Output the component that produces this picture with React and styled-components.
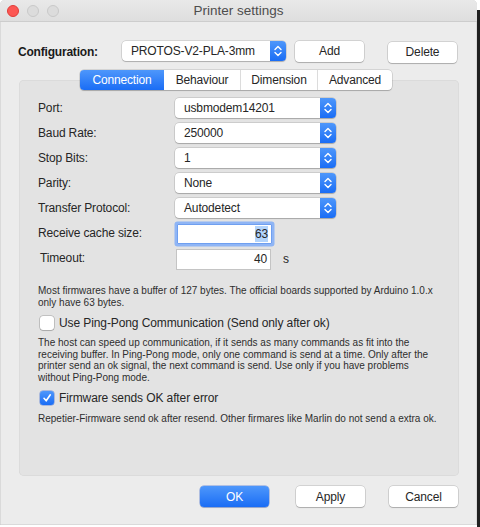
import React from "react";
import styled, { createGlobalStyle, css } from "styled-components";

const GlobalStyle = createGlobalStyle`
  html, body { margin: 0; padding: 0; background: #ffffff; }
  body { font-family: "Liberation Sans", Arial, sans-serif; color: #262626; }
  * { box-sizing: border-box; }
`;

const Page = styled.div`
  position: relative;
  width: 480px;
  height: 527px;
  overflow: hidden;
  &::after {
    content: "";
    position: absolute;
    right: 0;
    top: 10px;
    bottom: 0;
    width: 3px;
    background: #202020;
  }
`;

const Window = styled.div`
  width: 477px;
  height: 525px;
  background: #ececec;
  border-radius: 5px 5px 0 0;
  display: flex;
  flex-direction: column;
  overflow: hidden;
  box-shadow: inset 0 0 0 0.5px #c8c8c8;
`;

const TitleBar = styled.div`
  height: 22px;
  flex: none;
  display: flex;
  align-items: center;
  position: relative;
  background: linear-gradient(#e9e9e9, #dedede);
  border-bottom: 1px solid #cdcdcd;
  padding-left: 7px;
`;

const Lights = styled.div`
  display: flex;
  gap: 8px;
`;

const Light = styled.span`
  width: 12px;
  height: 12px;
  border-radius: 50%;
  background: ${(p) => (p.$red ? "#fc5753" : "#dcdcdc")};
  border: 0.5px solid ${(p) => (p.$red ? "#df3d39" : "#c8c8c8")};
`;

const Title = styled.div`
  position: absolute;
  left: 0;
  right: 0;
  text-align: center;
  font-size: 13.5px;
  color: #4d4d4d;
  pointer-events: none;
`;

const Body = styled.div`
  flex: 1;
  display: flex;
  flex-direction: column;
  padding: 18px 18px 0 19px;
`;

const ConfigRow = styled.div`
  display: flex;
  align-items: center;
  height: 22px;
`;

const BoldLabel = styled.div`
  width: 104px;
  font-size: 12px;
  letter-spacing: -0.2px;
  font-weight: bold;
  color: #1a1a1a;
  margin-left: -1px;
  padding-top: 2px;
`;

const textStyle = css`
  font-size: 12px;
  letter-spacing: -0.15px;
  color: #262626;
`;

const Button = styled.button`
  height: 21px;
  width: 69px;
  border-radius: 4px;
  font-family: "Liberation Sans", Arial, sans-serif;
  ${textStyle}
  display: flex;
  align-items: center;
  justify-content: center;
  border: none;
  padding: 0;
  background: ${(p) => (p.$primary ? "linear-gradient(#4e97fb, #1a6df5)" : "#ffffff")};
  color: ${(p) => (p.$primary ? "#ffffff" : "#262626")};
  box-shadow: ${(p) =>
    p.$primary
      ? "0 0 0 0.5px rgba(0,60,200,0.5), 0 1px 1px rgba(0,0,0,0.15)"
      : "0 0 0 0.5px rgba(0,0,0,0.22), 0 1px 1px rgba(0,0,0,0.18)"};
  margin-left: ${(p) => p.$ml || 0}px;
  margin-top: ${(p) => p.$mt || 0}px;
`;

const Popup = styled.div`
  width: ${(p) => p.$w}px;
  height: 20px;
  background: #ffffff;
  border-radius: 4px;
  box-shadow: 0 0 0 0.5px rgba(0,0,0,0.2), 0 1px 1px rgba(0,0,0,0.18);
  display: flex;
  align-items: center;
  ${textStyle}
  overflow: hidden;
`;

const PopupText = styled.span`
  flex: 1;
  padding-left: 9px;
`;

const Stepper = styled.span`
  width: 16px;
  height: 100%;
  background: linear-gradient(#4e97fb, #1a6df5);
  display: flex;
  align-items: center;
  justify-content: center;
`;

const Chevrons = () => (
  <svg width="10" height="14" viewBox="0 0 10 14">
    <path d="M2 5.5 L5 2.5 L8 5.5" fill="none" stroke="#fff" strokeWidth="1.4" strokeLinecap="round" strokeLinejoin="round" />
    <path d="M2 8.5 L5 11.5 L8 8.5" fill="none" stroke="#fff" strokeWidth="1.4" strokeLinecap="round" strokeLinejoin="round" />
  </svg>
);

const Select = ({ value, w }) => (
  <Popup $w={w}>
    <PopupText>{value}</PopupText>
    <Stepper>
      <Chevrons />
    </Stepper>
  </Popup>
);

const TabsWrap = styled.div`
  display: flex;
  justify-content: center;
  margin-top: 8px;
  padding-right: 6px;
  position: relative;
  z-index: 1;
`;

const Tabs = styled.div`
  display: flex;
  height: 20px;
  background: #ffffff;
  border-radius: 4px;
  box-shadow: 0 0 0 0.5px rgba(0,0,0,0.2), 0 1px 1px rgba(0,0,0,0.18);
  overflow: hidden;
`;

const Tab = styled.div`
  width: ${(p) => p.$w}px;
  display: flex;
  align-items: center;
  justify-content: center;
  ${textStyle}
  color: ${(p) => (p.$active ? "#ffffff" : "#262626")};
  background: ${(p) => (p.$active ? "linear-gradient(#4e97fb, #1a6df5)" : "transparent")};
  border-left: ${(p) => (p.$first || p.$afterActive ? "none" : "1px solid #dcdcdc")};
`;

const Group = styled.div`
  margin-top: -10px;
  height: 396px;
  width: 440px;
  background: #e3e3e3;
  border-radius: 5px;
  box-shadow: inset 0 0 0 0.5px #d4d4d4;
  padding: 18px 19px 0 19px;
  display: flex;
  flex-direction: column;
`;

const Form = styled.div`
  display: grid;
  grid-template-columns: 137px 1fr;
  row-gap: 5px;
  align-items: center;
`;

const Label = styled.div`
  ${textStyle}
  padding-left: ${(p) => (p.$indent ? 2 : 0)}px;
`;

const FieldRow = styled.div`
  display: flex;
  align-items: center;
  gap: 12px;
  height: 20px;
`;

const TextField = styled.div`
  width: ${(p) => p.$w}px;
  height: ${(p) => (p.$focus ? 20 : 21)}px;
  background: #ffffff;
  border: 1px solid ${(p) => (p.$focus ? "#6f9ff0" : "#c4c4c4")};
  box-shadow: ${(p) => (p.$focus ? "0 0 0 2.5px #8fb5f5" : "none")};
  border-radius: ${(p) => (p.$focus ? 1 : 0)}px;
  display: flex;
  align-items: center;
  justify-content: flex-end;
  padding-right: 3px;
  ${textStyle}
  margin-left: ${(p) => (p.$focus ? 2 : 1)}px;
  margin-top: ${(p) => (p.$focus ? 1 : 2)}px;
`;

const Selected = styled.span`
  background: #b3d4fc;
  padding: 1px 0;
`;

const Unit = styled.span`
  ${textStyle}
  margin-top: 2px;
`;

const Note = styled.p`
  margin: ${(p) => p.$mt}px 0 0 0;
  font-size: 10px;
  line-height: 11.5px;
  color: #2e2e2e;
  width: 400px;
`;

const CheckRow = styled.label`
  display: flex;
  align-items: center;
  gap: 5px;
  margin: ${(p) => p.$mt}px 0 0 2px;
  font-size: 12px;
  letter-spacing: -0.1px;
  color: #262626;
  height: 16px;
`;

const Box = styled.span`
  width: 14px;
  height: 14px;
  border-radius: 3px;
  display: flex;
  align-items: center;
  justify-content: center;
  background: ${(p) => (p.$checked ? "linear-gradient(#4e97fb, #1a6df5)" : "#ffffff")};
  box-shadow: ${(p) =>
    p.$checked
      ? "0 0 0 0.5px rgba(0,60,200,0.5)"
      : "0 0 0 0.5px rgba(0,0,0,0.3), 0 1px 1px rgba(0,0,0,0.12)"};
`;

const Check = () => (
  <svg width="10" height="10" viewBox="0 0 10 10">
    <path d="M2 5.3 L4.2 7.8 L8.3 1.8" fill="none" stroke="#fff" strokeWidth="1.6" strokeLinecap="round" strokeLinejoin="round" />
  </svg>
);

const Footer = styled.div`
  display: flex;
  justify-content: flex-end;
  margin-top: 10px;
  padding-right: 1px;
`;

export default function App() {
  const rows = [
    ["Port:", "usbmodem14201"],
    ["Baud Rate:", "250000"],
    ["Stop Bits:", "1"],
    ["Parity:", "None"],
    ["Transfer Protocol:", "Autodetect"],
  ];
  return (
    <Page>
      <GlobalStyle />
      <Window>
        <TitleBar>
          <Lights>
            <Light $red />
            <Light />
            <Light />
          </Lights>
          <Title>Printer settings</Title>
        </TitleBar>
        <Body>
          <ConfigRow>
            <BoldLabel>Configuration:</BoldLabel>
            <Select value="PROTOS-V2-PLA-3mm" w={164} />
            <Button $ml={9}>Add</Button>
            <Button $ml={24} $mt={2}>Delete</Button>
          </ConfigRow>
          <TabsWrap>
            <Tabs>
              <Tab $w={84} $active $first>Connection</Tab>
              <Tab $w={76} $afterActive>Behaviour</Tab>
              <Tab $w={77}>Dimension</Tab>
              <Tab $w={75}>Advanced</Tab>
            </Tabs>
          </TabsWrap>
          <Group>
            <Form>
              {rows.map(([l, v]) => (
                <React.Fragment key={l}>
                  <Label>{l}</Label>
                  <Select value={v} w={161} />
                </React.Fragment>
              ))}
              <Label>Receive cache size:</Label>
              <FieldRow>
                <TextField $w={95} $focus>
                  <Selected>63</Selected>
                </TextField>
              </FieldRow>
              <Label $indent>Timeout:</Label>
              <FieldRow>
                <TextField $w={95}>40</TextField>
                <Unit>s</Unit>
              </FieldRow>
            </Form>
            <Note $mt={17}>
              Most firmwares have a buffer of 127 bytes. The official boards supported by Arduino 1.0.x only have 63 bytes.
            </Note>
            <CheckRow $mt={7}>
              <Box />
              Use Ping-Pong Communication (Send only after ok)
            </CheckRow>
            <Note $mt={6}>
              The host can speed up communication, if it sends as many commands as fit into the receiving buffer. In Ping-Pong mode, only one command is send at a time. Only after the printer send an ok signal, the next command is send. Use only if you have problems without Ping-Pong mode.
            </Note>
            <CheckRow $mt={7}>
              <Box $checked>
                <Check />
              </Box>
              Firmware sends OK after error
            </CheckRow>
            <Note $mt={7}>
              Repetier-Firmware send ok after resend. Other firmares like Marlin do not send a extra ok.
            </Note>
          </Group>
          <Footer>
            <Button $primary>OK</Button>
            <Button $ml={27}>Apply</Button>
            <Button $ml={24}>Cancel</Button>
          </Footer>
        </Body>
      </Window>
    </Page>
  );
}
